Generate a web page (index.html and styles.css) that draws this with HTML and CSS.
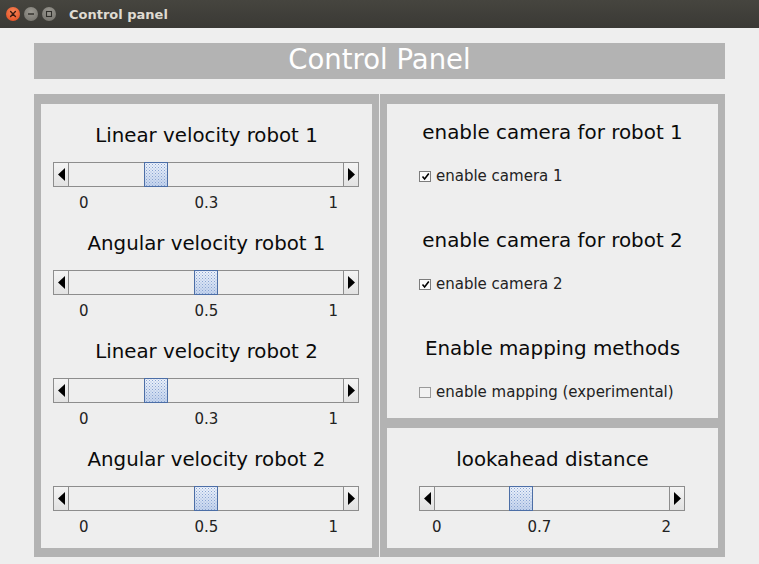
FILE: index.html
```html
<!DOCTYPE html>
<html>
<head>
<meta charset="utf-8">
<title>Control panel</title>
<link rel="stylesheet" href="styles.css">
</head>
<body>
<div class="titlebar">
  <div class="wbtns">
    <span class="wbtn close"><svg width="14" height="14" viewBox="0 0 14 14"><path d="M4.6 4.6 L9.4 9.4 M9.4 4.6 L4.6 9.4" stroke="#3a1a10" stroke-width="1.4" stroke-linecap="round"/></svg></span>
    <span class="wbtn"><svg width="14" height="14" viewBox="0 0 14 14"><path d="M4 7 H10" stroke="#2e2d29" stroke-width="1.4"/></svg></span>
    <span class="wbtn"><svg width="14" height="14" viewBox="0 0 14 14"><rect x="4.5" y="4.5" width="5" height="5" fill="none" stroke="#2e2d29" stroke-width="1.1"/></svg></span>
  </div>
  <span class="wtitle">Control panel</span>
</div>
<div class="main">
  <div class="header">Control Panel</div>
  <div class="panels">
    <div class="panel left">
      <div class="section">
        <div class="stitle">Linear velocity robot 1</div>
        <div class="slider wide">
          <span class="arrow a-left"><svg width="7" height="13" viewBox="0 0 7 13"><polygon points="7,0 0,6.5 7,13" fill="#000"/></svg></span>
          <div class="track"><span class="thumb" style="--p:0.3"></span></div>
          <span class="arrow a-right"><svg width="7" height="13" viewBox="0 0 7 13"><polygon points="0,0 7,6.5 0,13" fill="#000"/></svg></span>
        </div>
        <div class="scale s-wide"><span>0</span><span class="mid">0.3</span><span class="end">1</span></div>
      </div>
      <div class="section">
        <div class="stitle">Angular velocity robot 1</div>
        <div class="slider wide">
          <span class="arrow a-left"><svg width="7" height="13" viewBox="0 0 7 13"><polygon points="7,0 0,6.5 7,13" fill="#000"/></svg></span>
          <div class="track"><span class="thumb" style="--p:0.5"></span></div>
          <span class="arrow a-right"><svg width="7" height="13" viewBox="0 0 7 13"><polygon points="0,0 7,6.5 0,13" fill="#000"/></svg></span>
        </div>
        <div class="scale s-wide"><span>0</span><span class="mid">0.5</span><span class="end">1</span></div>
      </div>
      <div class="section">
        <div class="stitle">Linear velocity robot 2</div>
        <div class="slider wide">
          <span class="arrow a-left"><svg width="7" height="13" viewBox="0 0 7 13"><polygon points="7,0 0,6.5 7,13" fill="#000"/></svg></span>
          <div class="track"><span class="thumb" style="--p:0.3"></span></div>
          <span class="arrow a-right"><svg width="7" height="13" viewBox="0 0 7 13"><polygon points="0,0 7,6.5 0,13" fill="#000"/></svg></span>
        </div>
        <div class="scale s-wide"><span>0</span><span class="mid">0.3</span><span class="end">1</span></div>
      </div>
      <div class="section">
        <div class="stitle">Angular velocity robot 2</div>
        <div class="slider wide">
          <span class="arrow a-left"><svg width="7" height="13" viewBox="0 0 7 13"><polygon points="7,0 0,6.5 7,13" fill="#000"/></svg></span>
          <div class="track"><span class="thumb" style="--p:0.5"></span></div>
          <span class="arrow a-right"><svg width="7" height="13" viewBox="0 0 7 13"><polygon points="0,0 7,6.5 0,13" fill="#000"/></svg></span>
        </div>
        <div class="scale s-wide"><span>0</span><span class="mid">0.5</span><span class="end">1</span></div>
      </div>
    </div>
    <div class="rightcol">
      <div class="panel upper">
        <div class="cgroup">
          <div class="stitle">enable camera for robot 1</div>
          <label class="check"><span class="box on"><svg width="9" height="9" viewBox="0 0 9 9"><path d="M1.5 4.5 L3.6 7 L7.8 1.6" fill="none" stroke="#000" stroke-width="1.6"/></svg></span>enable camera 1</label>
        </div>
        <div class="cgroup">
          <div class="stitle">enable camera for robot 2</div>
          <label class="check"><span class="box on"><svg width="9" height="9" viewBox="0 0 9 9"><path d="M1.5 4.5 L3.6 7 L7.8 1.6" fill="none" stroke="#000" stroke-width="1.6"/></svg></span>enable camera 2</label>
        </div>
        <div class="cgroup">
          <div class="stitle">Enable mapping methods</div>
          <label class="check"><span class="box off"></span>enable mapping (experimental)</label>
        </div>
      </div>
      <div class="panel lower">
        <div class="section">
          <div class="stitle">lookahead distance</div>
          <div class="slider narrow">
            <span class="arrow a-left"><svg width="7" height="13" viewBox="0 0 7 13"><polygon points="7,0 0,6.5 7,13" fill="#000"/></svg></span>
            <div class="track"><span class="thumb" style="--p:0.35"></span></div>
            <span class="arrow a-right"><svg width="7" height="13" viewBox="0 0 7 13"><polygon points="0,0 7,6.5 0,13" fill="#000"/></svg></span>
          </div>
          <div class="scale s-narrow"><span>0</span><span class="mid">0.7</span><span class="end">2</span></div>
        </div>
      </div>
    </div>
  </div>
</div>
</body>
</html>
```

FILE: styles.css
```css
* { box-sizing: border-box; }
html, body {
  margin: 0;
  padding: 0;
}
body {
  width: 759px;
  height: 564px;
  overflow: hidden;
  background: #eeeeee;
  font-family: "DejaVu Sans", "Liberation Sans", sans-serif;
  color: #111;
}
.titlebar {
  height: 28px;
  background: linear-gradient(#46453f, #3a3935);
  display: flex;
  align-items: center;
  padding-left: 6px;
}
.wbtns {
  display: flex;
  gap: 4px;
}
.wbtn {
  width: 14px;
  height: 14px;
  border-radius: 50%;
  background: radial-gradient(circle at 50% 35%, #9c9a93, #6f6d67);
  display: flex;
  align-items: center;
  justify-content: center;
}
.wbtn.close {
  background: radial-gradient(circle at 50% 35%, #f7875a, #e0461a);
}
.wtitle {
  margin-left: 13px;
  font-weight: bold;
  font-size: 13px;
  color: #dfdbd2;
}
.main {
  padding: 15px 34px 0 34px;
}
.header {
  height: 36px;
  background: #b3b3b3;
  color: #fff;
  font-size: 27.5px;
  line-height: 32px;
  text-align: center;
}
.panels {
  margin-top: 15px;
  display: grid;
  grid-template-columns: 345px 345px;
  column-gap: 1px;
}
.panel {
  border-style: solid;
  border-color: #b3b3b3;
}
.panel.left {
  border-width: 10px 7px 9px 7px;
  height: 463px;
  padding: 20px 12px 0 12px;
}
.rightcol {
  display: flex;
  flex-direction: column;
}
.panel.upper {
  border-width: 10px 7px 0 7px;
  height: 324px;
  padding: 17px 0 0 0;
}
.panel.lower {
  border-width: 10px 7px 9px 7px;
  height: 139px;
  padding: 20px 0 0 32px;
}
.section {
  margin-bottom: 20px;
}
.stitle {
  height: 24px;
  line-height: 24px;
  font-size: 19.8px;
  text-align: center;
  color: #0a0a0a;
}
.panel.upper .stitle {
  font-size: 19.9px;
}
.panel.lower .stitle {
  margin-right: 32px;
}
.slider {
  margin-top: 14px;
  height: 25px;
  display: flex;
  border: 1px solid #8d8d8d;
  background: #eeeeee;
}
.slider.wide { width: 306px; }
.slider.narrow { width: 266px; }
.arrow {
  width: 15px;
  flex: none;
  background: linear-gradient(#f4f4f4, #e2e2e2);
  display: flex;
  align-items: center;
  justify-content: center;
}
.a-left { border-right: 1px solid #8d8d8d; }
.a-right { border-left: 1px solid #8d8d8d; }
.track {
  flex: 1;
  position: relative;
  background: #eeeeee;
}
.thumb {
  position: absolute;
  top: -1px;
  left: calc(var(--p) * (100% - 24px));
  width: 24px;
  height: 25px;
  border: 1px solid #4c6ea6;
  background:
    radial-gradient(circle, #88a3d2 0.5px, transparent 0.9px) 0 0 / 3px 3px,
    radial-gradient(circle, #9bb2dc 0.5px, transparent 0.9px) 1.5px 1.5px / 3px 3px,
    linear-gradient(#eef3fb, #c3d3ec);
}
.scale {
  margin-top: 7px;
  height: 18px;
  line-height: 18px;
  font-size: 15px;
  display: flex;
  color: #222;
}
.scale .end { margin-left: auto; }
.s-wide { width: 306px; padding: 0 21px 0 26px; }
.s-wide .mid { margin-left: 106px; }
.s-narrow { width: 266px; padding: 0 14px 0 13px; }
.s-narrow .mid { margin-left: 86px; }
.cgroup {
  margin-bottom: 44px;
}
.check {
  margin-top: 22px;
  display: flex;
  align-items: center;
  height: 18px;
  font-size: 15px;
  padding-left: 32px;
  color: #222;
}
.box {
  width: 12px;
  height: 11px;
  border: 1px solid #7c7c7c;
  background: #fbfbfb;
  margin-right: 5px;
  display: flex;
  align-items: center;
  justify-content: center;
}
.box.off {
  border-color: #9a9a9a;
  background: #f2f2f2;
}
```
